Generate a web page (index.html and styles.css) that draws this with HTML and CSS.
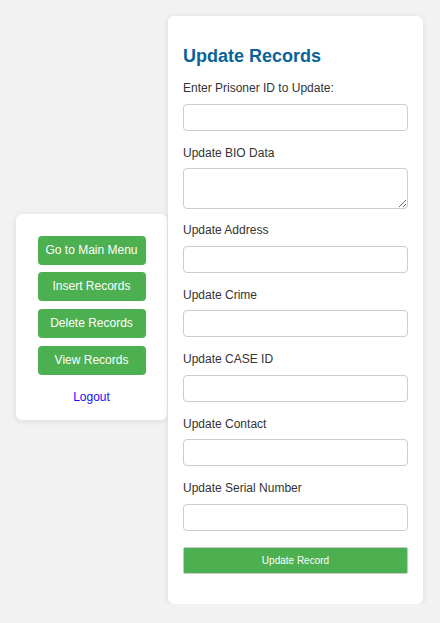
FILE: index.html
```html
<!DOCTYPE html>
<html lang="en">
<head>
<meta charset="utf-8">
<title>Update Records</title>
<link rel="stylesheet" href="styles.css">
</head>
<body>
<div class="layout">
  <nav class="sidebar">
    <a class="nav-btn" href="#">Go to Main Menu</a>
    <a class="nav-btn" href="#">Insert Records</a>
    <a class="nav-btn" href="#">Delete Records</a>
    <a class="nav-btn" href="#">View Records</a>
    <a class="logout" href="#">Logout</a>
  </nav>
  <main class="card">
    <h2 class="title">Update Records</h2>
    <form class="form">
      <label class="label">Enter Prisoner ID to Update:</label>
      <input class="field" type="text">
      <label class="label">Update BIO Data</label>
      <textarea class="field area"></textarea>
      <label class="label">Update Address</label>
      <input class="field" type="text">
      <label class="label">Update Crime</label>
      <input class="field" type="text">
      <label class="label">Update CASE ID</label>
      <input class="field" type="text">
      <label class="label">Update Contact</label>
      <input class="field" type="text">
      <label class="label">Update Serial Number</label>
      <input class="field" type="text">
      <button class="submit" type="button">Update Record</button>
    </form>
  </main>
</div>
</body>
</html>
```
FILE: styles.css
```css
* { box-sizing: border-box; }
html, body {
  margin: 0;
  padding: 0;
  background: #f2f2f2;
  font-family: "Liberation Sans", Arial, sans-serif;
}
.layout {
  display: flex;
  justify-content: flex-start;
  align-items: center;
  gap: 1px;
  padding: 16px 0 0 16px;
}
.sidebar {
  width: 151px;
  background: #fff;
  border-radius: 6px;
  box-shadow: 0 1px 6px rgba(0, 0, 0, 0.1);
  padding: 22px 21.5px 16.5px;
  display: flex;
  flex-direction: column;
  gap: 7.67px;
  margin-top: 14px;
}
.nav-btn {
  display: block;
  background: #4caf50;
  color: #fff;
  text-decoration: none;
  font-size: 12px;
  line-height: 15px;
  padding: 7px 0;
  text-align: center;
  border-radius: 4px;
  white-space: nowrap;
}
.logout {
  margin-top: 7.5px;
  text-align: center;
  color: #1a0dff;
  text-decoration: none;
  font-size: 12px;
  line-height: 14px;
}
.card {
  width: 255px;
  background: #fff;
  border-radius: 6px;
  box-shadow: 0 1px 6px rgba(0, 0, 0, 0.1);
  padding: 15px 15px 0;
}
.title {
  margin: 15px 0 15px;
  font-size: 18px;
  line-height: 20px;
  color: #0a6399;
}
.form {
  display: flex;
  flex-direction: column;
}
.label {
  font-size: 12px;
  line-height: 14.5px;
  color: #333;
  margin-bottom: 8px;
}
.field {
  display: block;
  width: 100%;
  height: 27px;
  border: 1px solid #ccc;
  border-radius: 4px;
  margin: 0 0 15px;
  font-family: inherit;
  font-size: 12px;
  padding: 4px 6px;
  background: #fff;
}
.area {
  height: 41px;
  resize: vertical;
  margin-bottom: 14px;
}
.submit {
  width: 100%;
  height: 27px;
  margin: 1px 0 30.5px;
  background: #4caf50;
  color: #fff;
  border: 1px solid #c8c8c8;
  border-radius: 2px;
  font-family: inherit;
  font-size: 10px;
  padding: 0;
}
```
